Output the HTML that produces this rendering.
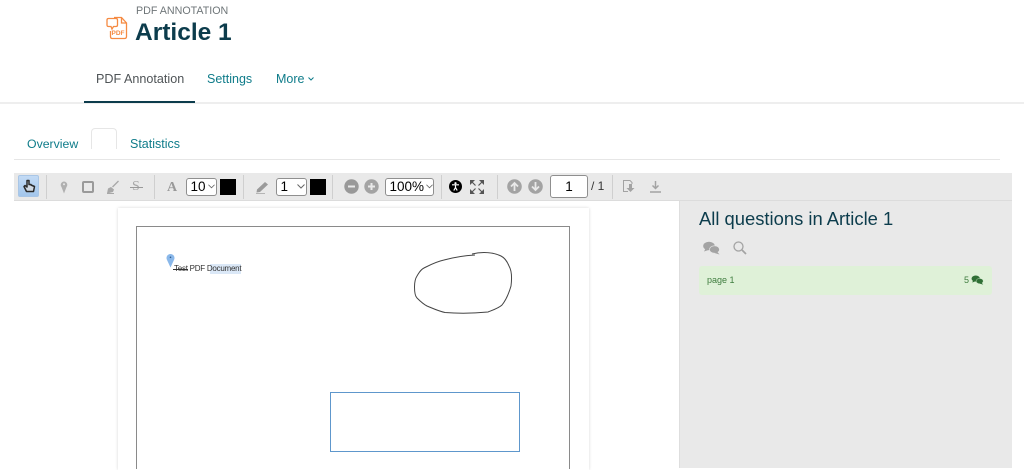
<!DOCTYPE html>
<html lang="en">
<head>
<meta charset="utf-8">
<title>Article 1</title>
<style>
html,body{margin:0;padding:0;background:#fff}
body{width:1024px;height:468px;overflow:hidden;position:relative;font-family:"Liberation Sans",Arial,sans-serif}
.a{position:absolute;white-space:nowrap}
.teal{color:#0f7c8a}
.sep{position:absolute;top:175px;width:1px;height:24px;background:#cfcfcf}
.sel{position:absolute;background:#fff;border:1px solid #8f8f8f;border-radius:3px;box-sizing:border-box;color:#000;font-size:13.500px;height:18px;line-height:16px;top:178px;padding-left:3.500px}
.sel svg{position:absolute;top:5px}
.sw{position:absolute;background:#000;width:16px;height:16px;top:179px}
svg{position:absolute;overflow:visible}
</style>
</head>
<body>
<!-- header -->
<svg style="left:106px;top:16px" width="22" height="24" viewBox="0 0 22 24" fill="none" stroke="#f58a42" stroke-width="1.300">
<path d="M8 1.500H15.500L20.500 7V20.500Q20.500 22.500 18.500 22.500H6Q4.500 22.500 4.500 20.500V15"/>
<path d="M15.500 1.500V7H20.500"/>
<path d="M2.500 2.500H10Q11.500 2.500 11.500 4V9Q11.500 10.500 10 10.500H7.500L6 13L5 10.500H2.500Q1 10.500 1 9V4Q1 2.500 2.500 2.500Z" fill="#fff"/>
<text x="5.500" y="19" font-family="Liberation Sans" font-size="6.500" font-weight="700" fill="#f58a42" stroke="none">PDF</text>
</svg>
<div class="a" style="left:136px;top:5px;font-size:10.700px;color:#6f7679;line-height:13px">PDF ANNOTATION</div>
<div class="a" style="left:135px;top:18px;font-size:24.500px;font-weight:700;color:#0c3c4c;line-height:30px">Article 1</div>

<div class="a" style="left:96px;top:71px;font-size:12.600px;color:#4f5457;line-height:16px">PDF Annotation</div>
<div class="a teal" style="left:207px;top:71px;font-size:12.500px;line-height:16px">Settings</div>
<div class="a teal" style="left:276px;top:71px;font-size:12.500px;line-height:16px">More</div>
<svg style="left:308px;top:77px" width="6" height="4" viewBox="0 0 6 4" fill="none" stroke="#0f7c8a"><path d="M.5 .5L3 3L5.500 .5"/></svg>
<div class="a" style="left:0;top:102px;width:1024px;height:2px;background:#eeeeee"></div>
<div class="a" style="left:84px;top:101px;width:111px;height:2px;background:#0c3c4c"></div>

<!-- tabs -->
<div class="a teal" style="left:27px;top:136px;font-size:12.300px;line-height:16px">Overview</div>
<div class="a" style="left:91px;top:128px;width:26px;height:21px;box-sizing:border-box;border:1px solid #e6e6e6;border-bottom:0;border-radius:4px 4px 0 0"></div>
<div class="a teal" style="left:130px;top:136px;font-size:12.500px;line-height:16px">Statistics</div>
<div class="a" style="left:14px;top:159px;width:986px;height:1px;background:#e6e6e6"></div>

<!-- main grey panels -->
<div class="a" style="left:14px;top:173px;width:998px;height:27px;background:#e9e9e9"></div>
<div class="a" style="left:14px;top:200px;width:998px;height:1px;background:#dcdcdc"></div>
<div class="a" style="left:680px;top:201px;width:332px;height:267px;background:#e9e9e9"></div>
<div class="a" style="left:679px;top:201px;width:1px;height:267px;background:#dedede"></div>

<!-- toolbar -->
<div class="a" style="left:18px;top:175px;width:21px;height:22px;background:linear-gradient(#c3dbf5,#a3c6ec);border:1px solid #a9c6e6;box-sizing:border-box;border-radius:2px"></div>
<svg style="left:22px;top:179px" width="14" height="14" viewBox="0 0 14 14"><path d="M5 1.500V8L3 6.500L2 7.500L4.500 12.500H11.500L12.500 7.500L9 6V5.500H7V1.500Z" fill="#cfd8e2" stroke="#2a2a2a" stroke-width="1.500" stroke-linejoin="round"/></svg>
<div class="sep" style="left:46px"></div>
<svg style="left:60px;top:181px" width="8" height="13" viewBox="0 0 8 13"><path d="M4 12.500L1.500 6A3.300 3.300 0 1 1 6.500 6Z" fill="#b0b0b0"/><circle cx="4" cy="3.300" r="1" fill="#e9e9e9"/></svg>
<div class="a" style="left:82px;top:181px;width:12px;height:12px;border:2px solid #9a9a9a;border-radius:2px;box-sizing:border-box"></div>
<svg style="left:106px;top:180px" width="14" height="14" viewBox="0 0 14 14" fill="#a8a8a8"><path d="M1 13.500L2 8.500L5 7L8 9.500L7 12Z"/><path d="M6.500 7L12.500 1" stroke="#a8a8a8" stroke-width="1.300"/><path d="M1 13.500H8" stroke="#a8a8a8"/></svg>
<div class="a" style="left:132px;top:179px;font-size:14px;line-height:16px;color:#a8a8a8;font-family:'Liberation Serif',serif">S</div>
<div class="a" style="left:130px;top:187px;width:13px;height:1px;background:#999"></div>
<div class="sep" style="left:154px"></div>
<div class="a" style="left:167px;top:180px;font-size:14px;line-height:16px;font-weight:700;color:#999;font-family:'Liberation Serif',serif">A</div>
<div class="sel" style="left:186px;width:31px">10<svg style="left:21px" width="7" height="5" viewBox="0 0 8 5" fill="none" stroke="#666"><path d="M.5 .5L4 4L7.500 .5"/></svg></div>
<div class="sw" style="left:220px"></div>
<div class="sep" style="left:243px"></div>
<svg style="left:255px;top:180px" width="15" height="14" viewBox="0 0 15 14" fill="#9a9a9a"><path d="M2 9.500L10 2L13 4.500L5 12L1.500 12.500Z"/><path d="M1 13.500H10" stroke="#b5b5b5"/></svg>
<div class="sel" style="left:276px;width:31px">1<svg style="left:20px" width="8" height="5" viewBox="0 0 8 5" fill="none" stroke="#666"><path d="M.5 .5L4 4L7.500 .5"/></svg></div>
<div class="sw" style="left:310px"></div>
<div class="sep" style="left:332px"></div>
<svg style="left:344px;top:179px" width="15" height="15" viewBox="0 0 15 15"><circle cx="7.500" cy="7.500" r="7.200" fill="#999"/><path d="M4 7.500H11" stroke="#e9e9e9" stroke-width="2"/></svg>
<svg style="left:364px;top:179px" width="15" height="15" viewBox="0 0 15 15"><circle cx="7.500" cy="7.500" r="7.200" fill="#a3a3a3"/><path d="M4 7.500H11M7.500 4V11" stroke="#e9e9e9" stroke-width="2"/></svg>
<div class="sel" style="left:385px;width:49px">100%<svg style="left:40px" width="7" height="5" viewBox="0 0 8 5" fill="none" stroke="#666"><path d="M.5 .5L4 4L7.500 .5"/></svg></div>
<div class="sep" style="left:441px"></div>
<svg style="left:449px;top:180px" width="13" height="13" viewBox="0 0 13 13"><circle cx="6.500" cy="6.500" r="6.500" fill="#000"/><circle cx="6.500" cy="3.200" r="1.100" fill="#fff"/><path d="M3 4.800H10M6.500 5V7.500M6.500 7.500L4.800 10.500M6.500 7.500L8.200 10.500" stroke="#fff" stroke-width="1.200" fill="none"/></svg>
<svg style="left:470px;top:180px" width="14" height="14" viewBox="0 0 14 14" fill="#555" stroke="none"><path d="M0 0H5L0 5ZM14 0H9L14 5ZM0 14H5L0 9ZM14 14H9L14 9Z"/><path d="M2 2L5.500 5.500M12 2L8.500 5.500M2 12L5.500 8.500M12 12L8.500 8.500" stroke="#555" stroke-width="1.200" fill="none"/></svg>
<div class="sep" style="left:497px"></div>
<svg style="left:507px;top:178.500px" width="15" height="15" viewBox="0 0 15 15"><circle cx="7.500" cy="7.500" r="7.300" fill="#a3a3a3"/><path d="M7.500 12V4M4 7.500L7.500 4L11 7.500" stroke="#e9e9e9" stroke-width="1.800" fill="none"/></svg>
<svg style="left:528px;top:178.500px" width="15" height="15" viewBox="0 0 15 15"><circle cx="7.500" cy="7.500" r="7.300" fill="#a3a3a3"/><path d="M7.500 3V11M4 7.500L7.500 11L11 7.500" stroke="#e9e9e9" stroke-width="1.800" fill="none"/></svg>
<div class="a" style="left:550px;top:175px;width:38px;height:23px;box-sizing:border-box;background:#fff;border:1px solid #8f8f8f;border-radius:3px;font-size:13.500px;line-height:21px;text-align:center;color:#000">1</div>
<div class="a" style="left:591px;top:179px;font-size:12px;line-height:14px;color:#333">/ 1</div>
<div class="sep" style="left:612px"></div>
<svg style="left:622px;top:179px" width="14" height="14" viewBox="0 0 14 14" fill="none" stroke="#a3a3a3"><path d="M6 1.500H1.500V12.500H6"/><path d="M5 1.500H8L10 3.500V5"/><path d="M7 5V9H4.500L8.500 13L12.500 9H10V5Z" fill="#a3a3a3" stroke="none"/></svg>
<svg style="left:649px;top:180px" width="13" height="13" viewBox="0 0 13 13" fill="none" stroke="#a3a3a3" stroke-width="1.500"><path d="M6.500 1V8M3.500 5.500L6.500 8.500L9.500 5.500M1 12H12"/></svg>

<!-- document -->
<div class="a" style="left:118px;top:208px;width:471px;height:262px;background:#fff;box-shadow:0 0 3px rgba(0,0,0,.16)"></div>
<div class="a" style="left:136px;top:226px;width:434px;height:243px;box-sizing:border-box;border:1px solid #8a8a8a;border-bottom:0;background:#fff"></div>
<div class="a" style="left:210px;top:264px;width:31px;height:10px;background:#dbe8f7"></div>
<div class="a" style="left:174px;top:264px;font-size:8px;letter-spacing:-.25px;line-height:10px;color:#333">Test PDF Document</div>
<div class="a" style="left:173px;top:268.500px;width:15px;height:1px;background:#333"></div>
<svg style="left:166px;top:253px" width="9" height="15" viewBox="0 0 9 15"><path d="M4.500 14.500L.8 6.500A4 4 0 1 1 8.200 6.500Z" fill="#8ab8ea"/><circle cx="4.500" cy="4.300" r=".8" fill="#2f5a8a"/></svg>
<svg style="left:400px;top:240px" width="130" height="85" viewBox="0 0 130 85" fill="none" stroke="#444" stroke-width="1">
<path d="M75 15C66 15.500 55 17 44 20C35 22 28 26 24 28C20 30 19 33 17 36C15 39 14.500 43 14.500 47C14.500 52 15 56 17 58C20 61 23 64 27 66C32 68 38 71 45 72.500C58 73.500 72 73.500 88 72C93 70 99 68 102 65C106 60 109 53 111 46C112 38 112 31 109 26C107 21 105 18 101 16C97 14 91 12.500 84 12.500C80 12.500 76 13 72 14"/>
</svg>
<div class="a" style="left:330px;top:392px;width:190px;height:60px;box-sizing:border-box;border:1px solid #5e97cc"></div>

<!-- sidebar -->
<div class="a" style="left:699px;top:208px;font-size:18.400px;line-height:22px;color:#0c3c4c">All questions in Article 1</div>
<svg style="left:703px;top:241px" width="17" height="14" viewBox="0 0 17 14" fill="#a3a3a3"><ellipse cx="6" cy="5" rx="5.800" ry="4.300"/><path d="M2.500 7.500L1 10.500L5.500 9Z"/><ellipse cx="11.500" cy="8.500" rx="5" ry="3.700" stroke="#e9e9e9" stroke-width=".6"/><path d="M14 10.500L16.500 13.500L11.500 12Z"/></svg>
<svg style="left:733px;top:241px" width="14" height="14" viewBox="0 0 14 14" fill="none" stroke="#a3a3a3" stroke-width="1.300"><circle cx="5.500" cy="5.500" r="4.500"/><path d="M9 9L13 13" stroke-width="1.700"/></svg>
<div class="a" style="left:699px;top:266px;width:293px;height:29px;background:#dff1d8;border-radius:3px"></div>
<div class="a" style="left:707px;top:274px;font-size:9px;line-height:12px;color:#3f7d3f">page 1</div>
<div class="a" style="left:964px;top:274px;font-size:9px;line-height:12px;color:#3f7d3f">5</div>
<svg style="left:971px;top:275px" width="13" height="10" viewBox="0 0 17 14" fill="#2f6f35"><ellipse cx="6" cy="5" rx="5.800" ry="4.300"/><path d="M2.500 7.500L1 10.500L5.500 9Z"/><ellipse cx="11.500" cy="8.500" rx="5" ry="3.700" stroke="#dff1d8" stroke-width=".6"/><path d="M14 10.500L16.500 13.500L11.500 12Z"/></svg>
</body>
</html>
